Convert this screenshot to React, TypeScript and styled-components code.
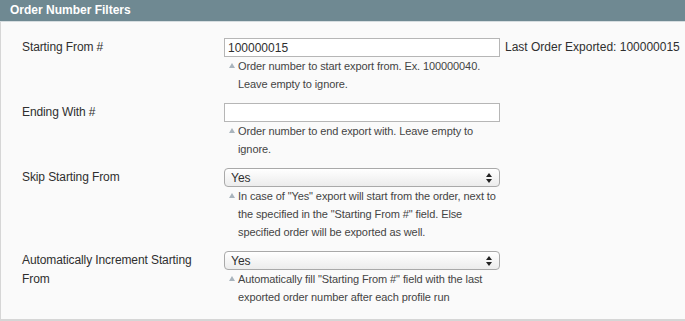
import React from "react";
import styled, { createGlobalStyle } from "styled-components";

const GlobalStyle = createGlobalStyle`
  html, body {
    margin: 0;
    padding: 0;
    background: #ffffff;
    font-family: "Liberation Sans", Arial, sans-serif;
  }
`;

const Fieldset = styled.section`
  width: 685px;
  box-sizing: border-box;
`;

const Header = styled.div`
  height: 21px;
  background: #6f8992;
  color: #ffffff;
  font-weight: bold;
  font-size: 12px;
  line-height: 21px;
  padding-left: 10px;
  border-bottom: 1px solid #d6dde0;
`;

const Body = styled.div`
  background: #fafafa;
  border-left: 1px solid #d6d6d6;
  border-bottom: 2px solid #d6d6d6;
  padding: 16px 0 13px 0;
  display: flex;
  flex-direction: column;
  gap: 10px;
`;

const Row = styled.div`
  display: grid;
  grid-template-columns: 202px 276px auto;
  padding-left: 21px;
  align-items: start;
`;

const Label = styled.div`
  font-size: 12px;
  line-height: 19px;
  color: #2f2f2f;
  padding-right: 20px;
  letter-spacing: -0.1px;
`;

const Value = styled.div`
  display: flex;
  flex-direction: column;
`;

const TextInput = styled.input`
  box-sizing: border-box;
  width: 276px;
  height: 19px;
  margin: 0;
  padding: 0 3px;
  border: 1px solid #b6b6b6;
  background: #ffffff;
  font-family: "Liberation Sans", Arial, sans-serif;
  font-size: 12px;
  color: #2f2f2f;
  outline: none;
`;

const Select = styled.div`
  box-sizing: border-box;
  width: 276px;
  height: 19px;
  border: 1px solid #a9a9a9;
  border-radius: 4px;
  background: linear-gradient(#ffffff, #ececec);
  display: flex;
  align-items: center;
  justify-content: space-between;
  padding: 0 7px 0 6px;
  font-size: 12px;
  color: #2f2f2f;
  box-shadow: inset 0 1px 0 #ffffff;
`;

const Note = styled.div`
  display: flex;
  font-size: 11px;
  line-height: 18px;
  color: #444444;
  padding-left: 5px;
  letter-spacing: -0.1px;
`;

const NoteMark = styled.span`
  flex: none;
  width: 9px;
  display: flex;
  padding-top: 6px;
  height: 6px;
`;

const Extra = styled.div`
  font-size: 12px;
  line-height: 19px;
  color: #2f2f2f;
  padding-left: 5px;
  white-space: nowrap;
`;

const Triangle = () => (
  <svg width="6" height="5" viewBox="0 0 6 5">
    <polygon points="3,0 6,5 0,5" fill="#a9b4bd" />
  </svg>
);

const Arrows = () => (
  <svg width="6" height="10" viewBox="0 0 6 10">
    <polygon points="3,0 6,4 0,4" fill="#222" />
    <polygon points="0,6 6,6 3,10" fill="#222" />
  </svg>
);

type FieldProps = {
  label: string;
  note: string;
  control: React.ReactNode;
  extra?: React.ReactNode;
};

const Field = ({ label, note, control, extra }: FieldProps) => (
  <Row>
    <Label>{label}</Label>
    <Value>
      {control}
      <Note>
        <NoteMark>
          <Triangle />
        </NoteMark>
        <span>{note}</span>
      </Note>
    </Value>
    {extra && <Extra>{extra}</Extra>}
  </Row>
);

const YesSelect = () => (
  <Select>
    <span>Yes</span>
    <Arrows />
  </Select>
);

export default function App() {
  return (
    <>
      <GlobalStyle />
      <Fieldset>
        <Header>Order Number Filters</Header>
        <Body>
          <Field
            label="Starting From #"
            control={<TextInput defaultValue="100000015" />}
            note="Order number to start export from. Ex. 100000040. Leave empty to ignore."
            extra="Last Order Exported: 100000015"
          />
          <Field
            label="Ending With #"
            control={<TextInput defaultValue="" />}
            note="Order number to end export with. Leave empty to ignore."
          />
          <Field
            label="Skip Starting From"
            control={<YesSelect />}
            note={'In case of "Yes" export will start from the order, next to the specified in the "Starting From #" field. Else specified order will be exported as well.'}
          />
          <Field
            label="Automatically Increment Starting From"
            control={<YesSelect />}
            note={'Automatically fill "Starting From #" field with the last exported order number after each profile run'}
          />
        </Body>
      </Fieldset>
    </>
  );
}
